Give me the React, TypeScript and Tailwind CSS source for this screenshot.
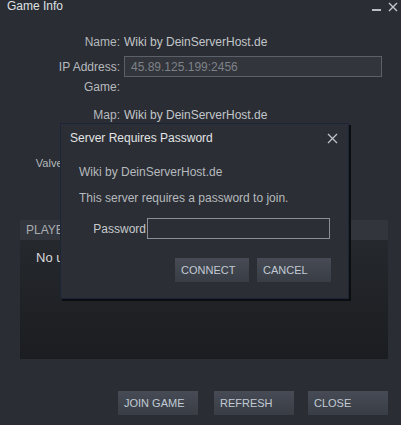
export default function App() {
  const font = { fontFamily: '"Liberation Sans", Arial, sans-serif' };
  return (
    <div
      className="relative w-[401px] h-[425px] overflow-hidden bg-[#2a2d33] text-[12px] text-[#b6babe]"
      style={font}
    >
      {/* title bar */}
      <div className="flex h-[14px] items-start justify-between">
        <div className="pl-[7px] pt-0 text-[12px] leading-[13px] text-[#dfe1e3]">Game Info</div>
        <div className="flex items-start gap-[7px] pr-[3px]">
          <div className="mt-[9px] h-[2px] w-[9px] bg-[#b9bcc0]" />
          <svg width="10" height="10" viewBox="0 0 10 10" className="mt-[2px]">
            <path d="M1 1 L9 9 M9 1 L1 9" stroke="#c4c7ca" strokeWidth="1.4" />
          </svg>
        </div>
      </div>

      {/* info rows */}
      <div className="mt-[20px] flex flex-col">
        <div className="flex h-[16px] items-center">
          <div className="w-[121px] pr-[1px] text-right">Name:</div>
          <div className="pl-[3px] text-[#c2c6ca]">Wiki by DeinServerHost.de</div>
        </div>
        <div className="mt-[6px] flex h-[21px] items-center">
          <div className="w-[121px] pr-[1px] text-right">IP Address:</div>
          <div className="ml-[3px] flex h-[21px] w-[258px] items-center border border-[#5c6068] bg-[#32353b] pl-[6px] text-[#7e8288]">
            45.89.125.199:2456
          </div>
        </div>
        <div className="mt-[2px] flex h-[16px] items-center">
          <div className="w-[121px] pr-[1px] text-right">Game:</div>
        </div>
        <div className="mt-[12px] flex h-[16px] items-center">
          <div className="w-[121px] pr-[1px] text-right">Map:</div>
          <div className="pl-[3px] text-[#c2c6ca]">Wiki by DeinServerHost.de</div>
        </div>
        <div className="mt-[32px] flex h-[16px] items-center">
          {/* label is mostly hidden under the dialog */}
          <div className="w-[60px] overflow-hidden whitespace-nowrap">
            <div className="w-[121px] pr-[1px] text-right text-[11px]">Valve Anti-Cheat:</div>
          </div>
        </div>
      </div>

      {/* players panel */}
      <div className="mx-[20px] mt-[49px] h-[139px] w-[368px] bg-gradient-to-b from-[#272a2f] to-[#1b1d20]">
        <div className="flex h-[20px] items-center bg-[#32353c] pl-[6px] text-[12px] text-[#a9adb2]">
          PLAYERS
        </div>
        <div className="pl-[16px] pt-[8px] text-[13px] text-[#d8dadc]">No users</div>
      </div>

      {/* bottom buttons */}
      <div className="mt-[32px] flex">
        <button className="ml-[118px] h-[24px] w-[80px] bg-gradient-to-b from-[#464b55] to-[#393d45] pl-[6px] text-left text-[11px] text-[#c1cad4]">
          JOIN GAME
        </button>
        <button className="ml-[16px] h-[24px] w-[80px] bg-gradient-to-b from-[#464b55] to-[#393d45] pl-[6px] text-left text-[11px] text-[#c1cad4]">
          REFRESH
        </button>
        <button className="ml-[14px] h-[24px] w-[80px] bg-gradient-to-b from-[#464b55] to-[#393d45] pl-[6px] text-left text-[11px] text-[#c1cad4]">
          CLOSE
        </button>
      </div>

      {/* password modal */}
      <div className="absolute left-[60px] top-[123px] flex h-[176px] w-[289px] flex-col border border-[#1c2538] bg-[#2b2e34] shadow-[2px_2px_0_#0c0d0f]">
        <div className="flex h-[28px] items-center justify-between pl-[9px] pr-[10px]">
          <div className="text-[12px] text-[#e2e4e6]">Server Requires Password</div>
          <svg width="11" height="11" viewBox="0 0 11 11">
            <path d="M1 1 L10 10 M10 1 L1 10" stroke="#bfc2c6" strokeWidth="1.3" />
          </svg>
        </div>
        <div className="mt-[11px] pl-[18px] text-[#b6babe]">Wiki by DeinServerHost.de</div>
        <div className="mt-[8px] pl-[18px] text-[#b6babe]">This server requires a password to join.</div>
        <div className="mt-[11px] flex items-center">
          <div className="w-[85px] text-right text-[#c6c9cc]">Password</div>
          <div className="ml-[1px] h-[21px] w-[183px] border border-[#8a8e96] bg-[#2b2e34]" />
        </div>
        <div className="mt-[19px] flex">
          <button className="ml-[114px] h-[24px] w-[74px] bg-gradient-to-b from-[#464b55] to-[#393d45] pl-[6px] text-left text-[11px] text-[#c1cad4]">
            CONNECT
          </button>
          <button className="ml-[8px] h-[24px] w-[74px] bg-gradient-to-b from-[#464b55] to-[#393d45] pl-[6px] text-left text-[11px] text-[#c1cad4]">
            CANCEL
          </button>
        </div>
      </div>
    </div>
  );
}
